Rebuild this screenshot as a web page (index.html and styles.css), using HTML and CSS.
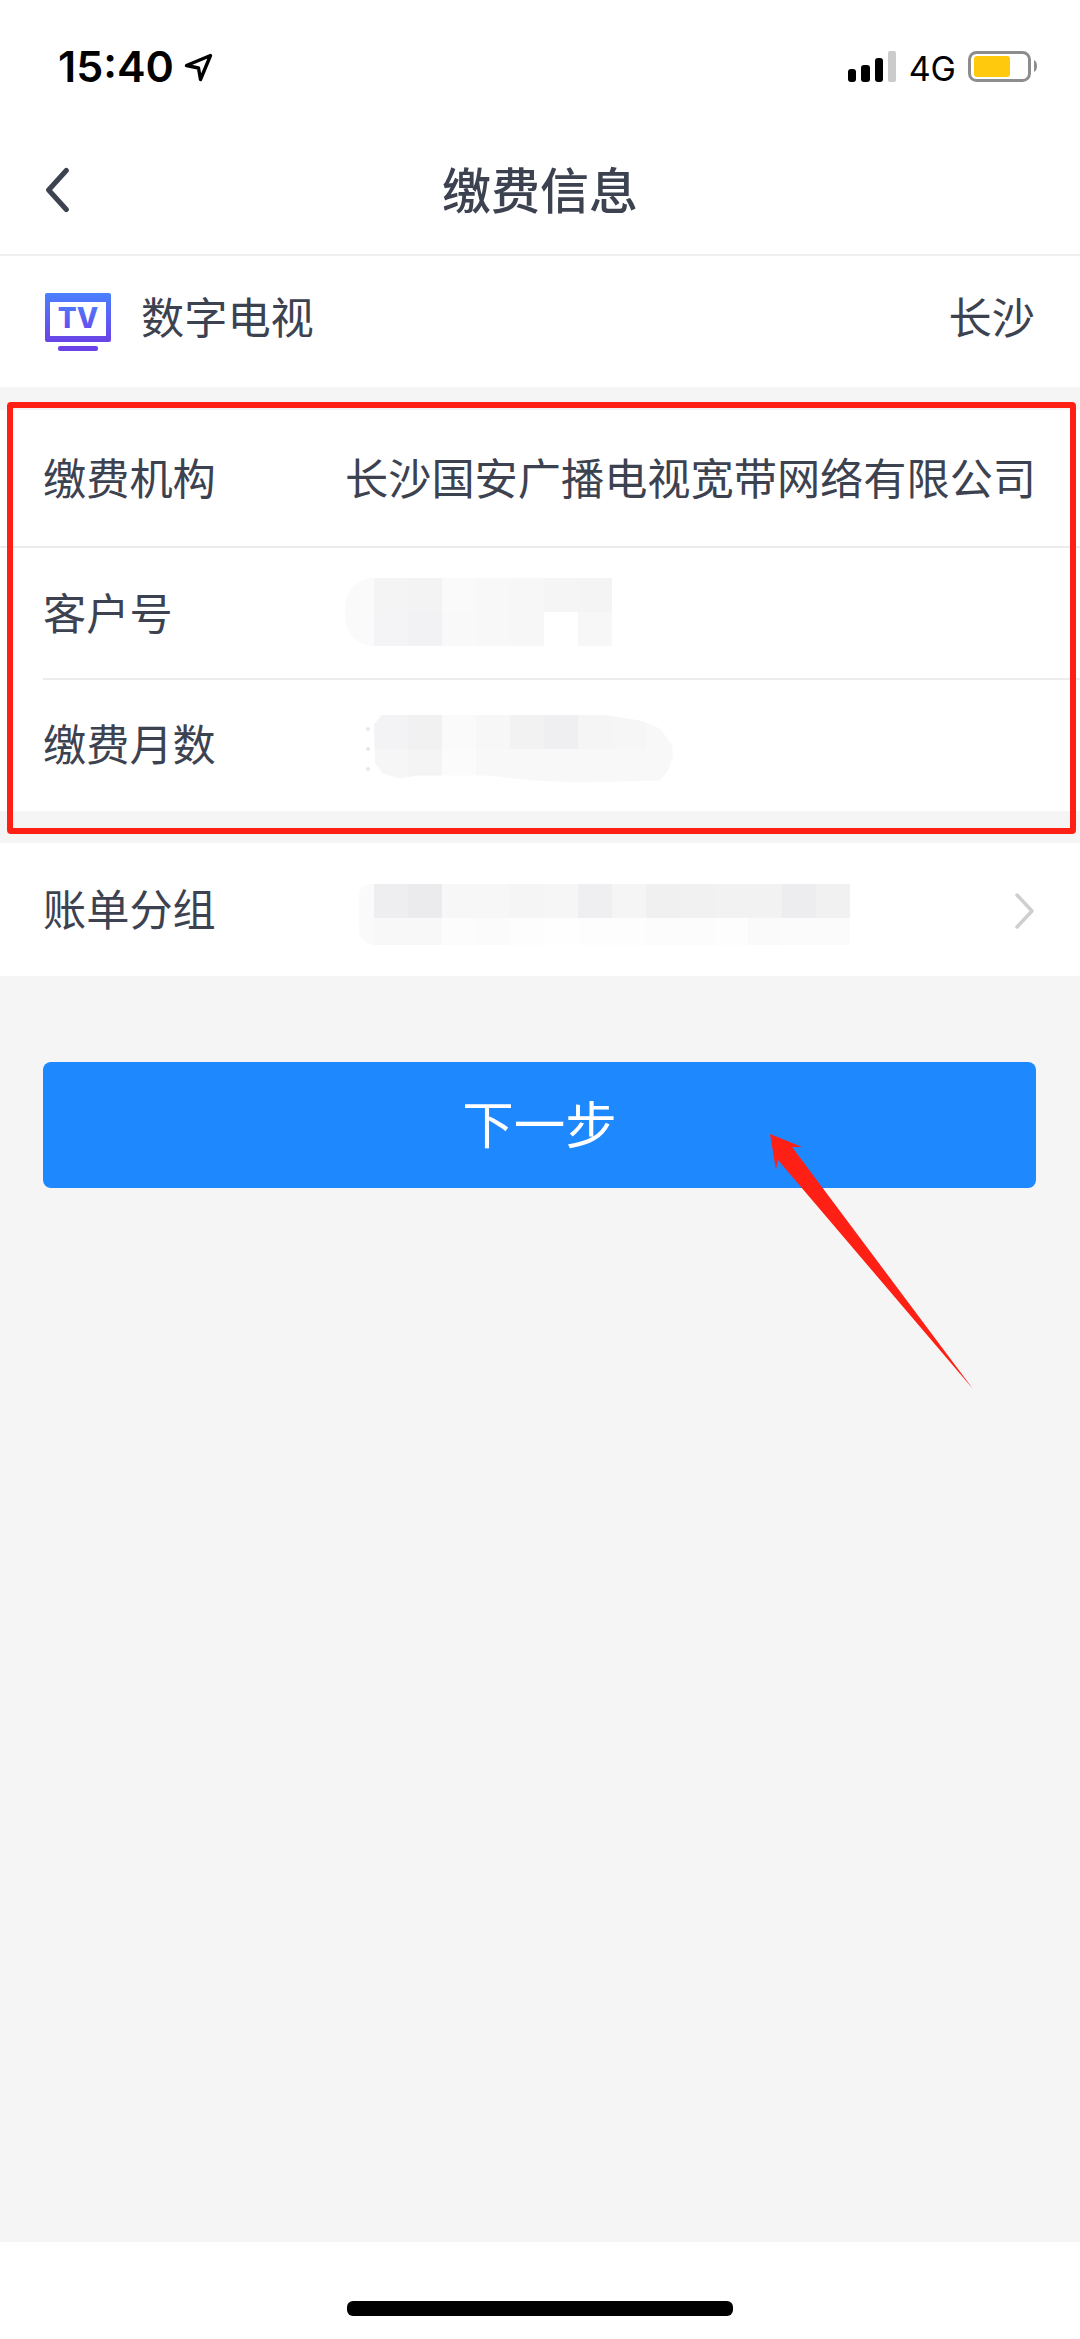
FILE: index.html
```html
<!DOCTYPE html>
<html lang="zh-CN">
<head>
<meta charset="utf-8">
<title>缴费信息</title>
<link rel="stylesheet" href="styles.css">
</head>
<body>
<div class="page">
  <header class="top">
    <div class="status">
      <div class="status-left">
        <span class="time">15:40</span>
        <svg class="loc" viewBox="184 51 30 30"><path d="M210.5 54.5 186.5 64.5 198.5 67 200.5 78.5Z" fill="none" stroke="#000" stroke-width="3.4" stroke-linejoin="round"/></svg>
      </div>
      <div class="status-right">
        <svg class="signal" viewBox="847 51 48 31">
          <rect x="847" y="69" width="8" height="13" rx="3"/>
          <rect x="860" y="65" width="9" height="17" rx="3"/>
          <rect x="874" y="58" width="8" height="24" rx="3"/>
          <rect x="887" y="51" width="8" height="31" rx="2" fill="#cbcbcb"/>
        </svg>
        <span class="net">4G</span>
        <svg class="battery" viewBox="969 51 70 31">
          <rect x="970.5" y="52.5" width="60" height="28" rx="7" fill="#fff" stroke="#8d8d8d" stroke-width="3"/>
          <rect x="975" y="56" width="36" height="21" rx="3" fill="#ffc90e"/>
          <path d="M1035 60c2 1 3 3 3 6s-1 5-3 6Z" fill="#8d8d8d"/>
        </svg>
      </div>
    </div>
    <nav class="nav">
      <svg class="back" viewBox="0 0 28 48"><path d="M24 3 5 24l19 21" fill="none" stroke="#3d4250" stroke-width="5.5" stroke-linecap="round" stroke-linejoin="round"/></svg>
      <h1 class="title">缴费信息</h1>
      <span></span>
    </nav>
  </header>

  <section class="service">
    <svg class="tv" viewBox="45 292 66 58">
      <defs><linearGradient id="tvg" x1="0" y1="0" x2="0" y2="1"><stop offset="0" stop-color="#4a80ff"/><stop offset="1" stop-color="#6b43e6"/></linearGradient></defs>
      <path fill="url(#tvg)" fill-rule="evenodd" d="M47 292h62a2 2 0 0 1 2 2v45a2 2 0 0 1-2 2H47a2 2 0 0 1-2-2v-45a2 2 0 0 1 2-2Zm3 9v34h56v-34Z"/>
      <rect x="58" y="345" width="40" height="5" rx="2" fill="#6b43e6"/>
      <text class="tv-text" x="78" y="327" text-anchor="middle">TV</text>
    </svg>
    <span class="service-name">数字电视</span>
    <span class="service-city">长沙</span>
  </section>

  <section class="group group-main">
    <div class="row row-a">
      <span class="label">缴费机构</span>
      <span class="value">长沙国安广播电视宽带网络有限公司</span>
    </div>
    <hr class="rule">
    <div class="row row-b">
      <span class="label">客户号</span>
      <div class="mosaic mosaic-b">
        <b class="cap cap-b"></b>
        <div class="cells cells-7">
          <i class="f4"></i><i class="f3"></i><i class="fa"></i><i class="f8"></i><i class="f7"></i><i class="f5"></i><i class="f4"></i>
          <i class="f4b"></i><i class="f2b"></i><i class="f9"></i><i class="f8"></i><i class="f7"></i><i class="ff"></i><i class="f7"></i>
        </div>
      </div>
    </div>
    <hr class="rule rule-inset">
    <div class="row row-c">
      <span class="label">缴费月数</span>
      <div class="ghost"><u></u><u></u><u></u></div>
      <div class="mosaic mosaic-c">
        <div class="cells cells-8">
          <i class="f3b"></i><i class="f1"></i><i class="fa"></i><i class="f7b"></i><i class="f2"></i><i class="ef"></i><i class="f5b"></i><i class="f6b"></i>
          <i class="f6b"></i><i class="f4"></i><i class="fb"></i><i class="f8"></i><i class="f8"></i><i class="f8"></i><i class="f8"></i><i class="f8"></i>
        </div>
        <b class="cap-end"></b>
      </div>
    </div>
  </section>

  <section class="group group-bill">
    <div class="row row-d">
      <span class="label">账单分组</span>
      <div class="mosaic mosaic-d">
        <b class="cap cap-d"></b>
        <div class="cells cells-14">
          <i class="ee"></i><i class="eb"></i><i class="f7"></i><i class="f7"></i><i class="f5"></i><i class="f6"></i><i class="ef"></i><i class="f5"></i><i class="f0"></i><i class="f1"></i><i class="f2"></i><i class="f2"></i><i class="ed"></i><i class="f1"></i>
          <i class="f8"></i><i class="f8"></i><i class="fc"></i><i class="fb"></i><i class="fd"></i><i class="fe"></i><i class="fd"></i><i class="fd"></i><i class="fc"></i><i class="fc"></i><i class="fd"></i><i class="fa"></i><i class="fb"></i><i class="fb"></i>
        </div>
      </div>
      <svg class="more" viewBox="0 0 22 38"><path d="M3 3l15 16L3 35" fill="none" stroke="#cfcfcf" stroke-width="3.5" stroke-linecap="round" stroke-linejoin="round"/></svg>
    </div>
  </section>

  <main class="content">
    <button class="next" type="button">下一步</button>
  </main>

  <footer class="home"><span class="home-bar"></span></footer>

  <div class="frame"></div>
  <svg class="pointer" viewBox="760 1125 220 270"><path d="M770 1134 802 1147 792 1147 973 1389 778 1160 776 1170Z" fill="#ff2015"/></svg>
</div>
</body>
</html>
```
FILE: styles.css
```css
* { box-sizing: border-box; }
html, body { margin: 0; padding: 0; }
body {
  width: 1080px;
  height: 2339px;
  font-family: "Noto Sans CJK SC", "Noto Sans", sans-serif;
  color: #3d4250;
  background: #f5f5f5;
  overflow: hidden;
}
.page {
  position: relative;
  width: 1080px;
  height: 2339px;
  display: flex;
  flex-direction: column;
}

/* header */
.top {
  height: 256px;
  background: #fff;
  border-bottom: 2px solid #f0f0f0;
  flex: none;
}
.status {
  height: 126px;
  padding: 51px 42px 0 58px;
  display: flex;
  justify-content: space-between;
  align-items: flex-start;
}
.status-left { display: flex; align-items: center; height: 31px; gap: 10px; }
.time {
  font-family: Inter, "Liberation Sans", sans-serif;
  font-size: 43px;
  font-weight: 600;
  line-height: 31px;
  color: #000;
}
.loc { width: 30px; height: 30px; }
.status-right { display: flex; align-items: center; height: 31px; }
.signal { width: 48px; height: 31px; fill: #000; }
.net {
  font-family: Inter, "Liberation Sans", sans-serif;
  font-size: 34px;
  line-height: 31px;
  color: #000;
  margin: 3px 12px 0 13px;
}
.battery { width: 70px; height: 31px; }
.nav {
  height: 128px;
  padding: 0 0 0 45px;
  display: grid;
  grid-template-columns: 1fr auto 1fr;
  align-items: center;
}
.back { width: 26px; height: 46px; margin-left: -1px; }
.title {
  margin: 0 0 4px -45px;
  font-size: 49px;
  font-weight: 500;
  line-height: 64px;
  color: #3d4250;
  text-align: center;
}

/* service */
.service {
  height: 131px;
  flex: none;
  background: #fff;
  padding: 0 45px 0 45px;
  display: flex;
  align-items: center;
  font-size: 43.2px;
  line-height: 60px;
}
.tv { width: 66px; height: 58px; flex: none; }
.tv-text {
  font-family: Inter, "Liberation Sans", sans-serif;
  font-size: 28px;
  font-weight: 800;
  fill: url(#tvg);
}
.service-name { margin: -14px 0 0 30px; }
.service-city { margin: -14px 0 0 auto; }

/* form groups */
.group { background: #fff; flex: none; }
.group-main { margin-top: 23px; }
.group-bill { margin-top: 32px; }
.row {
  display: flex;
  align-items: center;
  padding: 0 44px 0 43px;
  font-size: 43.2px;
  line-height: 60px;
}
.row-a { height: 136px; }
.row-b { height: 130px; }
.row-c { height: 131px; }
.row-d { height: 133px; }
.label { width: 302px; flex: none; margin-bottom: 4px; }
.row-c .label { margin-bottom: 8px; }
.row-d .label { margin-bottom: 6px; }
.value { margin: 0 2px 4px auto; white-space: nowrap; }
.rule { margin: 0; height: 2px; border: 0; background: #ececec; }
.rule-inset { margin-left: 43px; }

/* blurred-out values */
.mosaic { display: flex; flex: none; }
.mosaic-b { margin-top: -2px; }
.ghost {
  width: 9px;
  height: 44px;
  margin: 6px 0 0 18px;
  display: flex;
  flex-direction: column;
  justify-content: space-between;
  align-items: center;
  flex: none;
}
.ghost u { display: block; width: 4px; height: 4px; background: #e8e8eb; border-radius: 2px; }
.mosaic-c {
  height: 68px;
  margin: 6px 0 0 2px;
  clip-path: polygon(8px 0, 229px 0, 266px 6px, 286px 14px, 298px 30px, 299px 43px, 294px 56px, 286px 66px, 206px 68px, 158px 66px, 116px 61px, 43px 61px, 26px 64px, 9px 59px, 1px 49px, 0 10px);
}
.mosaic-d { margin: 10px 0 0 14px; }
.cap { display: block; background: #fafafa; }
.cap-b { width: 29px; height: 68px; border-radius: 29px 0 0 29px; }
.cap-d { width: 15px; height: 61px; border-radius: 15px 0 0 20px; }
.cap-end { display: block; width: 27px; height: 68px; background: #f8f8f9; }
.cells { display: grid; grid-auto-rows: 34px; }
.cells-7 { grid-template-columns: repeat(7, 34px); }
.cells-8 { grid-template-columns: repeat(8, 34px); }
.cells-14 { grid-template-columns: repeat(14, 34px); grid-template-rows: 34px 27px; }
.cells i { display: block; }
.eb { background: #ebebed; }
.ed { background: #ededf0; }
.ee { background: #eeeef0; }
.ef { background: #efeff1; }
.f0 { background: #f0f0f0; }
.f1 { background: #f1f1f2; }
.f2 { background: #f2f2f3; }
.f2b { background: #f2f2f4; }
.f3 { background: #f3f3f3; }
.f3b { background: #f3f3f5; }
.f4 { background: #f4f4f4; }
.f4b { background: #f4f4f6; }
.f5 { background: #f5f5f5; }
.f5b { background: #f5f5f6; }
.f6 { background: #f6f6f6; }
.f6b { background: #f6f6f7; }
.f7 { background: #f7f7f7; }
.f7b { background: #f7f7f8; }
.f8 { background: #f8f8f8; }
.f9 { background: #f9f9f9; }
.fa { background: #fafafa; }
.fb { background: #fbfbfb; }
.fc { background: #fcfcfc; }
.fd { background: #fdfdfd; }
.fe { background: #fefefe; }
.ff { background: #ffffff; }
.more { width: 22px; height: 38px; margin: 2px 0 0 auto; flex: none; }

/* content */
.content {
  flex: 1;
  padding: 86px 44px 0 43px;
  background: #f5f5f5;
}
.next {
  display: block;
  width: 100%;
  height: 126px;
  border: 0;
  border-radius: 8px;
  background: #1e88ff;
  color: #fff;
  font-family: inherit;
  font-size: 51.5px;
  font-weight: 400;
  padding: 0 0 8px;
}
.home {
  height: 97px;
  flex: none;
  background: #fff;
  display: flex;
  justify-content: center;
  padding-top: 59px;
}
.home-bar {
  display: block;
  width: 386px;
  height: 15px;
  border-radius: 6px;
  background: #000;
}

/* annotations drawn over the screenshot */
.frame {
  position: absolute;
  left: 7px;
  top: 402px;
  width: 1069px;
  height: 432px;
  border: 6px solid #ff2015;
  border-radius: 4px;
}
.pointer {
  position: absolute;
  left: 760px;
  top: 1125px;
  width: 220px;
  height: 270px;
}
```
